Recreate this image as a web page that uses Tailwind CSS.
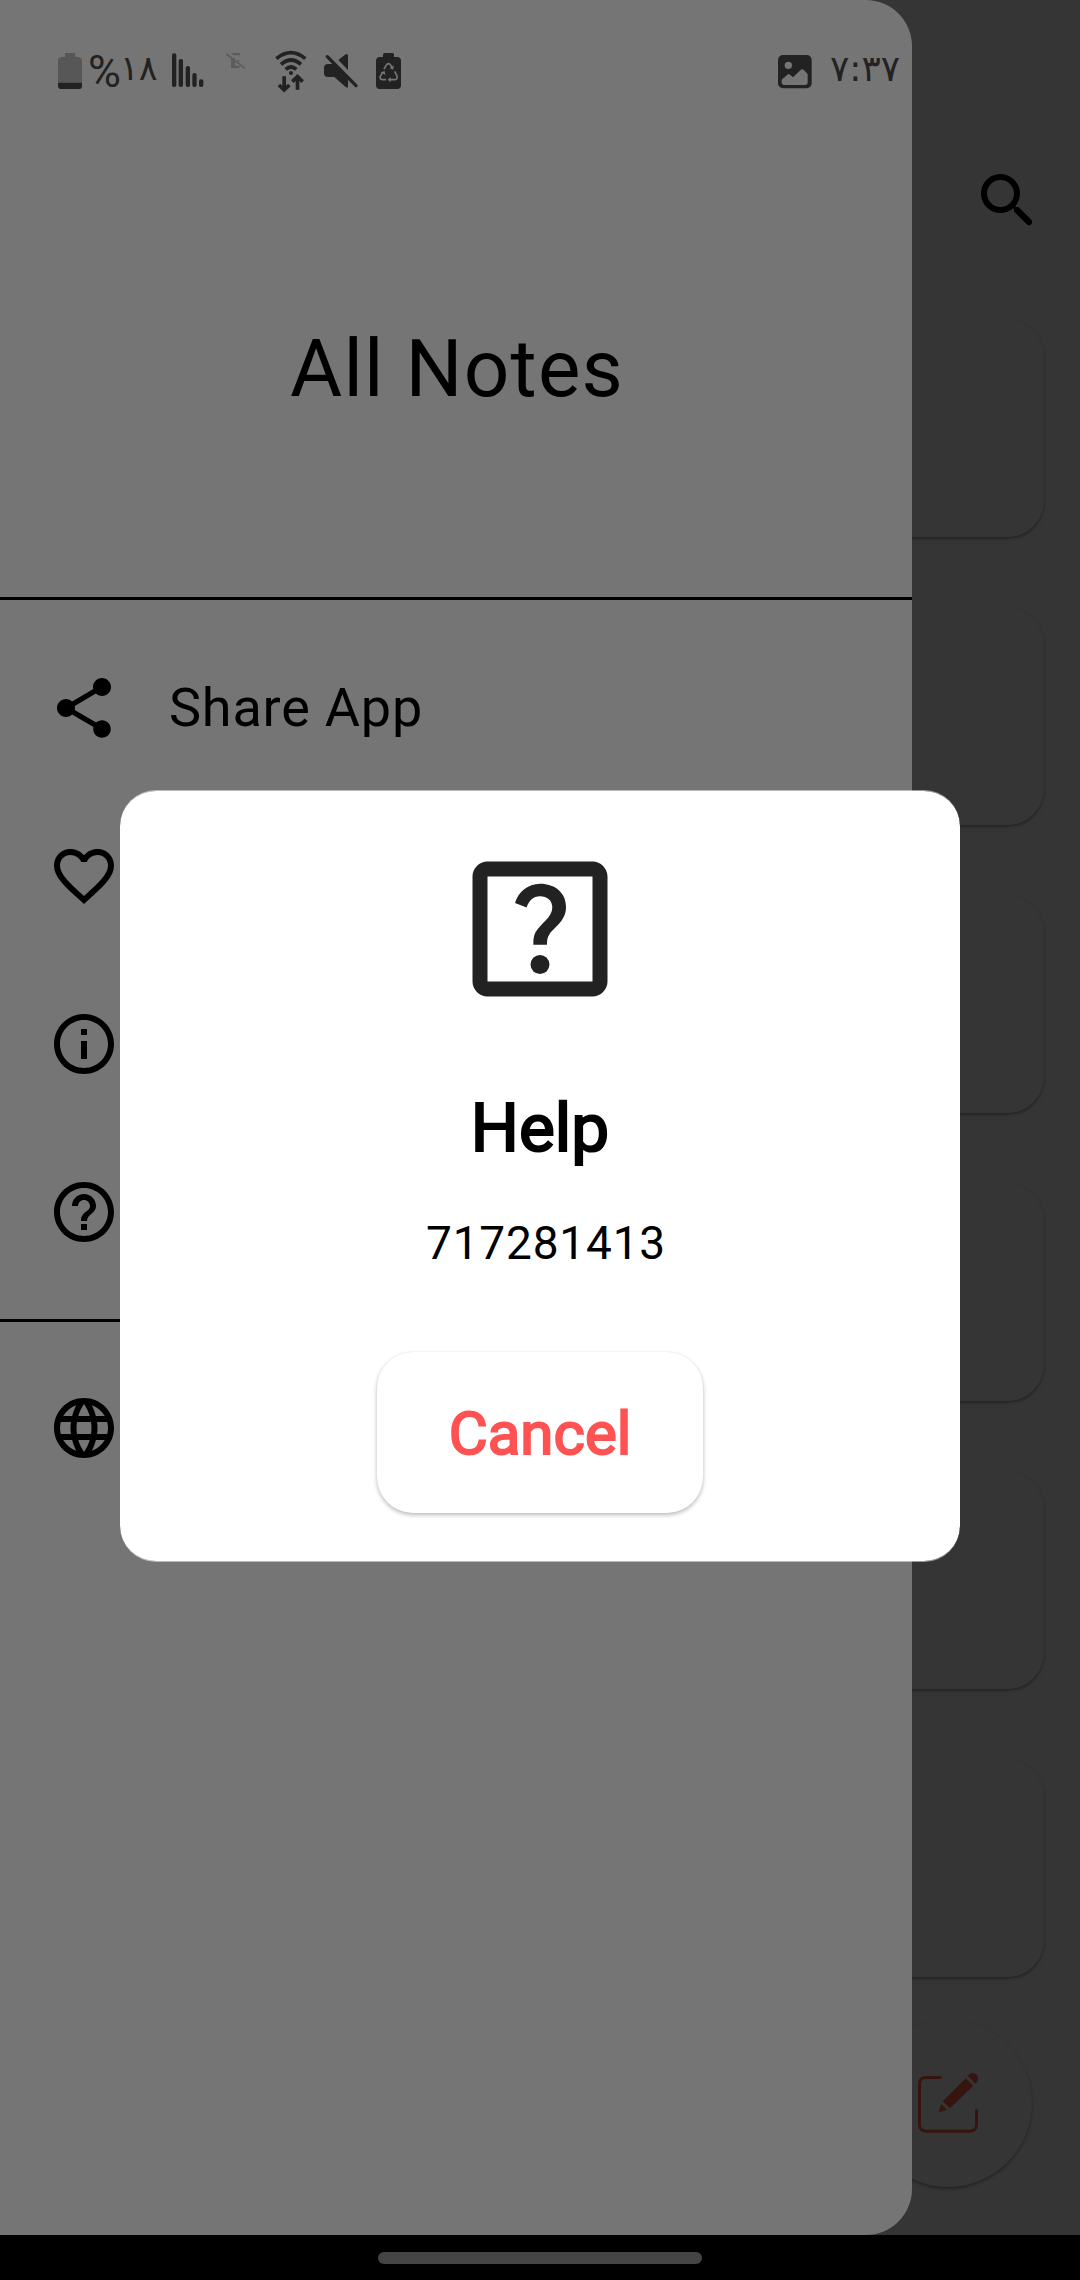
<!DOCTYPE html>
<html lang="en">
<head>
<meta charset="utf-8">
<title>All Notes</title>
<script src="https://cdn.jsdelivr.net/npm/@tailwindcss/browser@4"></script>
</head>
<body class="bg-black">
<div class="relative w-[1080px] h-[2280px] overflow-hidden bg-black font-['Roboto',sans-serif] text-black flex flex-col">

  <!-- Notes screen behind the drawer -->
  <main class="h-[2235px] shrink-0 bg-[#353535] overflow-hidden">
    <header class="h-[320px] flex justify-end items-start pt-[165px] pr-9">
      <svg class="size-[72px]" viewBox="0 0 24 24"><path d="M15.5 14h-.79l-.28-.27c1.2-1.4 1.82-3.31 1.48-5.34-.47-2.78-2.79-5-5.59-5.34-4.23-.52-7.79 3.04-7.27 7.27.34 2.8 2.56 5.12 5.34 5.59 2.03.34 3.94-.28 5.34-1.48l.27.28v.79l4.25 4.25c.41.41 1.08.41 1.49 0 .41-.41.41-1.08 0-1.49L15.5 14zm-6 0C7.01 14 5 11.99 5 9.5S7.01 5 9.5 5 14 7.01 14 9.5 11.99 14 9.5 14z"/></svg>
    </header>
    <div class="flex flex-col gap-[71px] px-9">
      <div class="h-[217px] shrink-0 rounded-[36px] bg-[#353535] shadow-[0_2px_3px_rgba(0,0,0,0.3),0_0_1px_rgba(0,0,0,0.04)]"></div>
      <div class="h-[217px] shrink-0 rounded-[36px] bg-[#353535] shadow-[0_2px_3px_rgba(0,0,0,0.3),0_0_1px_rgba(0,0,0,0.04)]"></div>
      <div class="h-[217px] shrink-0 rounded-[36px] bg-[#353535] shadow-[0_2px_3px_rgba(0,0,0,0.3),0_0_1px_rgba(0,0,0,0.04)]"></div>
      <div class="h-[217px] shrink-0 rounded-[36px] bg-[#353535] shadow-[0_2px_3px_rgba(0,0,0,0.3),0_0_1px_rgba(0,0,0,0.04)]"></div>
      <div class="h-[217px] shrink-0 rounded-[36px] bg-[#353535] shadow-[0_2px_3px_rgba(0,0,0,0.3),0_0_1px_rgba(0,0,0,0.04)]"></div>
      <div class="h-[217px] shrink-0 rounded-[36px] bg-[#353535] shadow-[0_2px_3px_rgba(0,0,0,0.3),0_0_1px_rgba(0,0,0,0.04)]"></div>
    </div>
  </main>

  <!-- Compose button -->
  <div class="absolute left-[864px] top-[2019px] size-[168px] rounded-full bg-[#353535] shadow-[0_2px_3px_rgba(0,0,0,0.3),0_0_1px_rgba(0,0,0,0.04)] pl-[54px] pt-[53px]">
    <svg class="w-[61px] h-[61px]" viewBox="354 396 183 183" fill="#37150f">
      <path d="M420 412.500H379Q358.500 412.500 358.500 433V553Q358.500 573.500 379 573.500H509Q529.500 573.500 529.500 553V512" fill="none" stroke="#37150f" stroke-width="9" stroke-linecap="round"/>
      <path d="M428 484L497 415L520 437L450 505ZM424 492L441 509L416 517ZM503 408C510 397 522 396 530 404C536 411 536 423 526 431Z"/>
    </svg>
  </div>

  <!-- Navigation bar -->
  <footer class="flex-1 flex justify-center items-start pt-[17px]">
    <div class="w-[324px] h-3 rounded-full bg-[#454545]"></div>
  </footer>

  <!-- Drawer -->
  <aside class="absolute left-0 top-0 w-[912px] h-[2235px] rounded-r-[46px] bg-[#757575]">
    <div class="h-[140px] flex items-start justify-between pt-[46px] pl-[58px] pr-[11px] text-[#222]">
      <div class="flex items-start">
        <svg class="w-6 h-12" viewBox="54 48 72 144"><path fill="#575757" d="M75 69H106V81H116Q126 83 126 92V158H54V92Q54 83 64 81H75Z"/><path fill="#222" d="M54 158H126V167Q126 177 116 177H64Q54 177 54 167Z"/></svg>
        <span class="ml-[6px] w-[31px] text-[45px] leading-[51px] h-12">%</span>
        <span class="ml-[1px] w-[52px] font-['DejaVu_Sans',sans-serif] text-[35px] leading-[45px] tracking-[-2.5px]">١٨</span>
        <svg class="w-8 h-12" viewBox="397 48 96 144" fill="#222"><rect x="397" y="70" width="13" height="101" rx="6"/><rect x="417" y="87" width="13" height="84" rx="6"/><rect x="438" y="108" width="13" height="63" rx="6"/><rect x="458" y="129" width="13" height="42" rx="6"/><rect x="478" y="148" width="13" height="23" rx="6"/></svg>
        <svg class="ml-[21px] w-[22px] h-12" viewBox="556 48 66 144"><path d="M575 69H601V76H582ZM574 84H586V107H600V114H574ZM590 90H599V97Z" fill="#5c5c5c"/><path d="M560 72L616 115" stroke="#5c5c5c" stroke-width="5"/></svg>
        <svg class="ml-[28px] w-8 h-12" viewBox="707 48 96 144" fill="none" stroke="#222" stroke-width="11"><path d="M711 86Q755 50 798 86M725 103Q755 77 785 103M739 118Q755 104 771 118"/><circle cx="755" cy="129" r="6" fill="#222" stroke="none"/><path d="M734.500 139V178M774.500 179V142"/><path d="M719 165L734.500 180L750 165M759 155L774.500 140L790 155"/></svg>
        <svg class="ml-[17px] w-9 h-12" viewBox="852 48 108 144" fill="#222"><path d="M864 102H883L924 143V168Q924 176 917 171L883 141H864Q852 141 852 130V114Q852 102 864 102ZM895 90L917 73Q924 69 924 77V120Z"/><path d="M862 80L948 167" stroke="#222" stroke-width="10" stroke-linecap="round"/></svg>
        <svg class="ml-[16px] w-[26px] h-12" viewBox="1008 48 78 144"><path fill="#222" d="M1029 74Q1029 69 1034 69H1057Q1062 69 1062 74V81H1072Q1083 82 1083 93V166Q1083 177 1072 177H1019Q1008 177 1008 166V93Q1008 82 1019 81H1029Z"/><path d="M1032 117L1040 104Q1045 98 1051 104L1057 113M1064 124L1071 138Q1073 148 1065 149H1050M1038 149H1027Q1018 147 1021 139L1027 128" fill="none" stroke="#757575" stroke-width="5"/><path fill="#757575" d="M1061 106L1060 119L1049 115ZM1052 141V157L1043 149ZM1022 127L1034 123L1036 135Z"/></svg>
      </div>
      <div class="flex items-start">
        <svg class="w-[34px] h-12" viewBox="115 138 102 144"><rect x="115" y="165" width="101" height="100" rx="15" fill="#222"/><circle cx="146" cy="196" r="11" fill="#757575"/><path fill="#757575" d="M126 239L143 224Q147 220 151 224L160 232L182 211Q188 205 193 211L204 222V247Q204 255 196 255H134Q126 255 126 247Z"/></svg>
        <span class="ml-[18px] w-[71px] font-['DejaVu_Sans',sans-serif] text-[36px] leading-[46px] whitespace-nowrap">٧:٣٧</span>
      </div>
    </div>
    <h1 class="h-[457px] flex items-center justify-center pl-[2px] text-[80px] leading-none tracking-[1.15px]">All Notes</h1>
    <div class="h-[3px] bg-black"></div>
    <nav class="pt-6 pb-[23px] pl-12">
      <div class="h-[168px] flex items-center gap-[49px]">
        <svg class="size-[72px]" viewBox="0 0 24 24"><path d="M18 16.080c-.76 0-1.440.3-1.960.77L8.910 12.700c.05-.23.09-.46.09-.7s-.04-.47-.09-.7l7.050-4.110c.54.5 1.250.81 2.040.81 1.660 0 3-1.340 3-3s-1.340-3-3-3-3 1.340-3 3c0 .24.04.47.09.7L8.040 9.810C7.500 9.310 6.790 9 6 9c-1.660 0-3 1.340-3 3s1.340 3 3 3c.79 0 1.500-.31 2.040-.81l7.120 4.160c-.05.21-.08.43-.08.65 0 1.610 1.310 2.920 2.920 2.920s2.920-1.310 2.920-2.920-1.310-2.920-2.920-2.920z"/></svg>
        <span class="text-[54px] leading-none tracking-[0.8px]">Share App</span>
      </div>
      <div class="h-[168px] flex items-center">
        <svg class="size-[72px]" viewBox="0 0 24 24"><path d="M16.500 3c-1.740 0-3.410.81-4.500 2.090C10.910 3.810 9.240 3 7.500 3 4.420 3 2 5.420 2 8.500c0 3.780 3.400 6.860 8.550 11.540L12 21.350l1.450-1.320C18.600 15.360 22 12.280 22 8.500 22 5.420 19.580 3 16.500 3zm-4.400 15.550l-.1.100-.1-.1C7.140 14.240 4 11.390 4 8.500 4 6.500 5.500 5 7.500 5c1.540 0 3.040.99 3.570 2.360h1.870C13.460 5.990 14.960 5 16.500 5c2 0 3.500 1.500 3.500 3.500 0 2.890-3.140 5.740-7.900 10.050z"/></svg>
      </div>
      <div class="h-[168px] flex items-center">
        <svg class="size-[72px]" viewBox="0 0 24 24"><path d="M11 7h2v2h-2zm0 4h2v6h-2zm1-9C6.480 2 2 6.480 2 12s4.480 10 10 10 10-4.480 10-10S17.520 2 12 2zm0 18c-4.410 0-8-3.590-8-8s3.590-8 8-8 8 3.590 8 8-3.590 8-8 8z"/></svg>
      </div>
      <div class="h-[168px] flex items-center">
        <svg class="size-[72px]" viewBox="0 0 24 24"><path d="M11 18h2v-2h-2v2zm1-16C6.480 2 2 6.480 2 12s4.480 10 10 10 10-4.480 10-10S17.520 2 12 2zm0 18c-4.410 0-8-3.590-8-8s3.590-8 8-8 8 3.590 8 8-3.590 8-8 8zm0-14c-2.210 0-4 1.790-4 4h2c0-1.100.9-2 2-2s2 .9 2 2c0 2-3 1.750-3 5h2c0-2.250 3-2.500 3-5 0-2.210-1.790-4-4-4z"/></svg>
      </div>
    </nav>
    <div class="h-[3px] bg-black"></div>
    <div class="mt-[22px] h-[168px] flex items-center pl-12">
      <svg class="size-[72px]" viewBox="0 0 24 24"><path d="M11.990 2C6.470 2 2 6.480 2 12s4.470 10 9.990 10C17.520 22 22 17.520 22 12S17.520 2 11.990 2zm6.930 6h-2.950c-.32-1.250-.78-2.450-1.380-3.560 1.840.63 3.370 1.910 4.330 3.560zM12 4.040c.83 1.200 1.480 2.530 1.910 3.960h-3.820c.43-1.430 1.080-2.760 1.910-3.960zM4.260 14C4.100 13.360 4 12.690 4 12s.1-1.360.26-2h3.380c-.08.66-.14 1.320-.14 2s.06 1.340.14 2H4.260zm.82 2h2.950c.32 1.250.78 2.450 1.380 3.560-1.840-.63-3.370-1.900-4.330-3.560zm2.950-8H5.080c.96-1.660 2.490-2.930 4.330-3.560C8.810 5.550 8.350 6.750 8.030 8zM12 19.960c-.83-1.200-1.480-2.530-1.910-3.960h3.820c-.43 1.430-1.080 2.760-1.910 3.960zM14.340 14H9.660c-.09-.66-.16-1.320-.16-2s.07-1.350.16-2h4.680c.09.65.16 1.320.16 2s-.07 1.340-.16 2zm.25 5.560c.6-1.110 1.060-2.310 1.380-3.560h2.950c-.96 1.650-2.490 2.930-4.330 3.560zM16.360 14c.08-.66.14-1.320.14-2s-.06-1.340-.14-2h3.380c.16.64.26 1.310.26 2s-.1 1.360-.26 2h-3.380z"/></svg>
    </div>
  </aside>

  <!-- Help dialog -->
  <section class="absolute left-[120px] top-[790px] w-[840px] h-[772px] rounded-[36px] bg-white bg-clip-padding border-y border-white/50 flex flex-col items-center pt-[47.5px]">
    <svg class="size-[180px] shrink-0" viewBox="0 0 24 24" fill="#222"><path d="M19 3H5c-1.100 0-2 .9-2 2v14c0 1.100.9 2 2 2h14c1.100 0 2-.9 2-2V5c0-1.100-.9-2-2-2zm0 16H5V5h14v14z"/><circle cx="12" cy="16.730" r="1.260"/><path d="M11.110 14.110c0-.75.05-1.250.31-1.700C12.100 11.200 13.640 10.500 13.640 9.090 13.640 8.200 12.950 7.620 12 7.620c-.9 0-1.500.6-1.780 1.500l-1.550-.6C9.100 7.100 10.400 5.980 12 5.980c2 0 3.470 1.200 3.470 3.100 0 .7-.2 1.250-.58 1.790-.55.75-1.300 1.300-1.650 1.860-.26.42-.31.750-.31 1.380z"/></svg>
    <h2 class="mt-[69.5px] text-[67.500px] leading-[80px] [-webkit-text-stroke:2.2px_#000]">Help</h2>
    <p class="mt-[48px] ml-[12px] text-[46px] leading-[54px] tracking-[0.8px]">717281413</p>
    <button class="mt-[82px] w-[326px] h-[161px] shrink-0 rounded-[36px] bg-white text-[60px] leading-[60px] pt-[3px] text-[#ff5252] [-webkit-text-stroke:2px_#ff5252] shadow-[0_2px_4px_rgba(0,0,0,0.28),0_0_1px_rgba(0,0,0,0.06)]">Cancel</button>
  </section>
</div>
</body>
</html>
